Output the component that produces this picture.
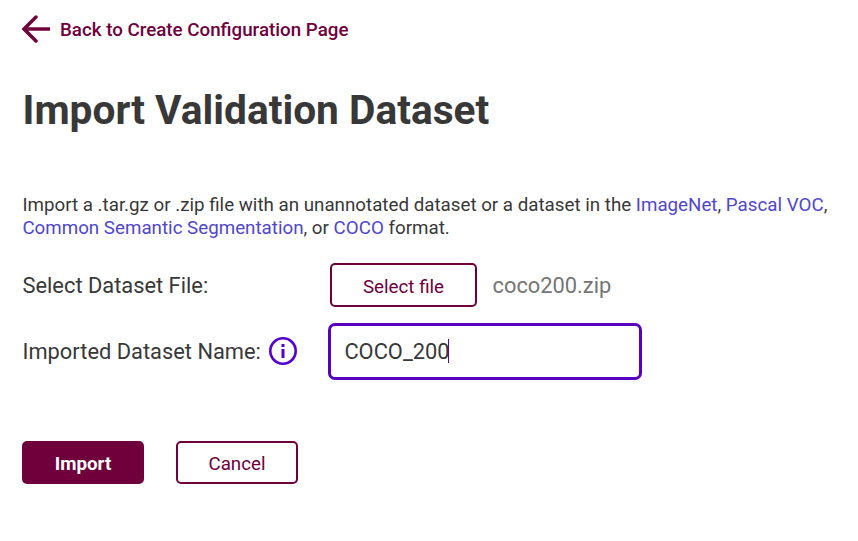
<main>
  <a class="back" href="#back">
    <svg width="28" height="28" viewBox="0 0 28 28" fill="none" stroke="#6f003c" stroke-width="3.5"><path d="M28 14H3" /><path d="M14 2L2 14L14 26" stroke-linecap="round" stroke-linejoin="miter" /></svg>
    <span>Back to Create Configuration Page</span>
  </a>
  <h1>Import Validation Dataset</h1>
  <p>Import a .tar.gz or .zip file with an unannotated dataset or a dataset in the <a href="#imagenet">ImageNet</a>, <a href="#voc">Pascal VOC</a>,<br /><a href="#css">Common Semantic Segmentation</a>, or <a href="#coco">COCO</a> format.</p>
  <div class="row file">
    <span class="label">Select Dataset File:</span>
    <button class="select">Select file</button>
    <span class="filename">coco200.zip</span>
  </div>
  <div class="row name">
    <div class="label"><span>Imported Dataset Name:</span>
      <svg width="28" height="28" viewBox="0 0 28 28"><circle cx="14" cy="14" r="12.7" fill="none" stroke="#5300d0" stroke-width="2.6" /><path d="M14 12v9M14 7v3" stroke="#5300d0" stroke-width="3" /></svg>
    </div>
    <div class="input"><span>COCO_200</span><i></i></div>
  </div>
  <div class="actions">
    <button class="primary">Import</button>
    <button>Cancel</button>
  </div>
</main>

<style>
  :global(body) { margin: 0; background: #fff; }
  main { box-sizing: border-box; width: 858px; height: 541px; padding: 15px 0 0 22px; font-family: Roboto, sans-serif; color: #383838; overflow: hidden; }
  a { text-decoration: none; color: #4f46d0; }
  .back { display: flex; align-items: center; gap: 10px; height: 28px; color: #6f003c; font-size: 18.75px; font-weight: 500; white-space: nowrap; }
  .back span { padding-top: 2px; }
  h1 { margin: 41px 0 0; padding-left: .5px; font-size: 40.65px; line-height: 52px; font-weight: 700; white-space: nowrap; }
  p { margin: 58px 0 0; padding-left: .4px; font-size: 18.75px; line-height: 23px; white-space: nowrap; }
  .row { display: flex; align-items: center; font-size: 21.85px; white-space: nowrap; }
  .file { margin-top: 23px; height: 44px; }
  .name { margin-top: 16px; height: 57px; }
  .label { box-sizing: border-box; display: flex; align-items: center; width: 306px; padding-left: .5px; }
  .name .label { padding-bottom: 1px; }
  .name .label span { box-sizing: border-box; width: 246.5px; padding-top: 1px; }
  .file .label { width: 308px; }
  button { box-sizing: border-box; width: 122px; height: 43px; padding: 2px 0 0; border: 2px solid #6f003c; border-radius: 5px; background: #fff; color: #6f003c; font: 400 18.75px Roboto, sans-serif; }
  .select { width: 147px; height: 44px; padding-top: 3px; }
  .filename { margin-left: 15.5px; color: #757575; }
  .input { box-sizing: border-box; display: flex; align-items: center; width: 314px; height: 57px; padding-left: 13.4px; border: 3px solid #5700bd; border-radius: 7px; }
  .input i { width: 1px; height: 24px; margin: 0 0 1px -2px; background: #5700bd; }
  .actions { display: flex; gap: 32px; margin-top: 61px; }
  .primary { background: #6f003c; color: #fff; font-weight: 700; }
</style>
